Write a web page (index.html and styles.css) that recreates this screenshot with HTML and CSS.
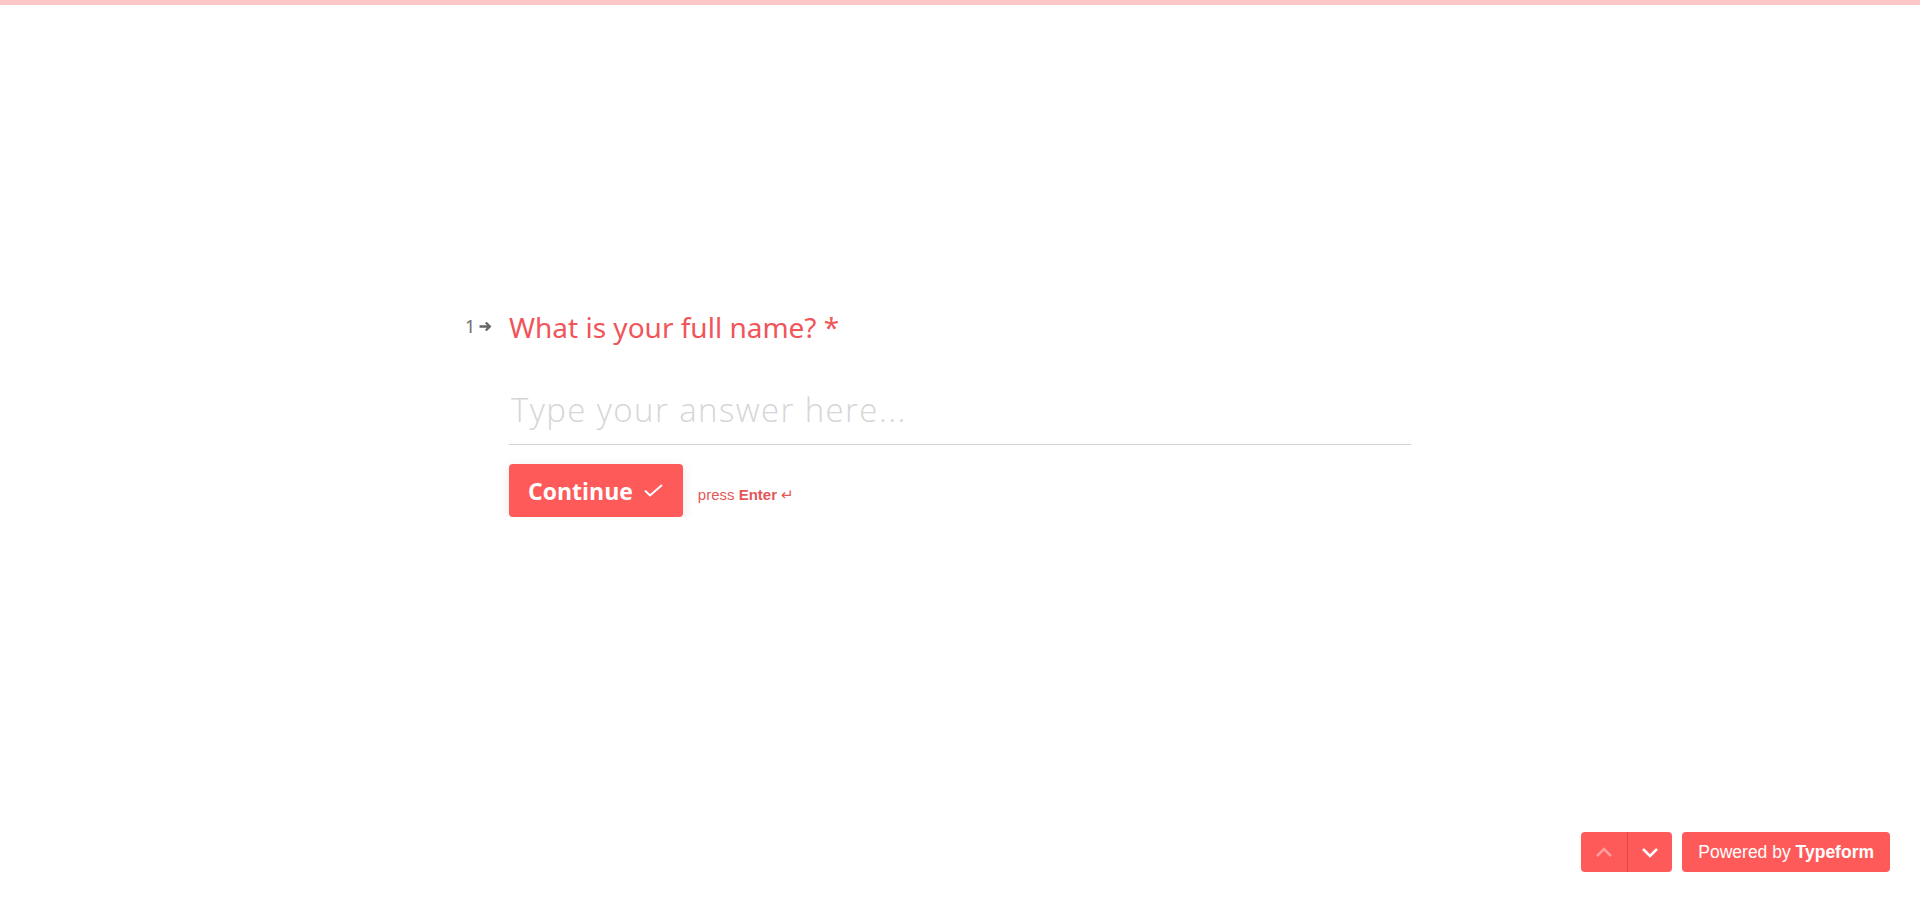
FILE: index.html
```html
<!DOCTYPE html>
<html lang="en">
<head>
    <meta charset="UTF-8">
    <meta name="viewport" content="width=device-width, initial-scale=1.0">
    <title>Typeform</title>
    <link rel="stylesheet" href="styles.css">
</head>
<body>
<div class="progress"></div>
<main class="form">
    <section class="question">
        <div class="question-title">
            <span class="counter">1
                <svg class="counter-arrow" width="13" height="11" viewBox="0 0 13 11">
                    <path d="M0.5 5.5h10M6.8 1.5l4 4-4 4" fill="none" stroke="currentColor" stroke-width="2.4"/>
                </svg>
            </span>
            <h1>What is your full name? *</h1>
        </div>
        <input class="answer" type="text" placeholder="Type your answer here...">
        <div class="actions">
            <button class="btn-continue">Continue
                <svg width="19" height="13" viewBox="0 0 19 13">
                    <path d="M1 6.5l5 5L18 1" fill="none" stroke="#fff" stroke-width="2"/>
                </svg>
            </button>
            <span class="hint">press <strong>Enter</strong> &#8629;</span>
        </div>
    </section>
</main>
<footer class="footer-nav">
    <div class="nav-arrows">
        <button class="nav-btn disabled">
            <svg width="18" height="11" viewBox="0 0 18 11"><path d="M2 9l7-7 7 7" fill="none" stroke="#fff" stroke-width="2.5"/></svg>
        </button>
        <button class="nav-btn">
            <svg width="18" height="11" viewBox="0 0 18 11"><path d="M2 2l7 7 7-7" fill="none" stroke="#fff" stroke-width="2.5"/></svg>
        </button>
    </div>
    <a class="powered" href="#">Powered by <strong>Typeform</strong></a>
</footer>
</body>
</html>
```

FILE: styles.css
```css
body {
    margin: 0;
    background-color: #fff;
    font-family: "Noto Sans", Arial, sans-serif;
}

.progress {
    height: 5px;
    background-color: #ffc8c8;
}

.form {
    display: flex;
    justify-content: center;
    padding-top: 302px;
}

.question {
    width: 902px;
}

.question-title {
    display: flex;
    align-items: flex-start;
    margin-left: -44px;
}

.counter {
    display: flex;
    align-items: center;
    gap: 4px;
    width: 44px;
    margin-top: 9px;
    font-size: 18px;
    line-height: 20px;
    color: #707070;
}

.counter-arrow {
    color: #666;
}

.question-title h1 {
    margin: 0;
    font-size: 28px;
    font-weight: 400;
    line-height: 40px;
    color: #f0555a;
}

.answer {
    display: block;
    width: 100%;
    box-sizing: border-box;
    margin-top: 40px;
    padding: 0 2px 12px;
    border: none;
    border-bottom: 1px solid #d4d4d4;
    font-family: "Open Sans", sans-serif;
    font-size: 33px;
    font-weight: 300;
    letter-spacing: 1.4px;
    line-height: 45px;
    color: #444;
    outline: none;
}

.answer::placeholder {
    color: #d6d6d6;
}

.actions {
    display: flex;
    align-items: baseline;
    gap: 15px;
    margin-top: 19px;
}

.btn-continue {
    display: flex;
    align-items: center;
    gap: 11px;
    height: 53px;
    padding: 0 20px 0 19px;
    border: none;
    border-radius: 4px;
    background-color: #ff5a5a;
    box-shadow: 0 3px 12px rgba(0, 0, 0, 0.1);
    color: #fff;
    font-family: "Open Sans", sans-serif;
    font-size: 23px;
    font-weight: 700;
    cursor: pointer;
}

.hint {
    font-family: Arial, "Liberation Sans", sans-serif;
    font-size: 15px;
    color: #e45757;
}

.footer-nav {
    position: fixed;
    right: 30px;
    bottom: 30px;
    display: flex;
    gap: 10px;
}

.nav-arrows {
    display: flex;
    border-radius: 4px;
    overflow: hidden;
}

.nav-btn {
    width: 46px;
    height: 40px;
    padding: 0;
    border: none;
    background-color: #ff5a5a;
    display: flex;
    align-items: center;
    justify-content: center;
}

.nav-btn + .nav-btn {
    width: 45px;
    border-left: 1px solid #d94848;
}

.nav-btn.disabled svg {
    opacity: 0.4;
}

.powered {
    display: block;
    height: 40px;
    padding: 0 16px;
    border-radius: 4px;
    background-color: #ff5a5a;
    color: #fff;
    font-family: Arial, "Liberation Sans", sans-serif;
    font-size: 17.5px;
    line-height: 40px;
    text-decoration: none;
}
```
